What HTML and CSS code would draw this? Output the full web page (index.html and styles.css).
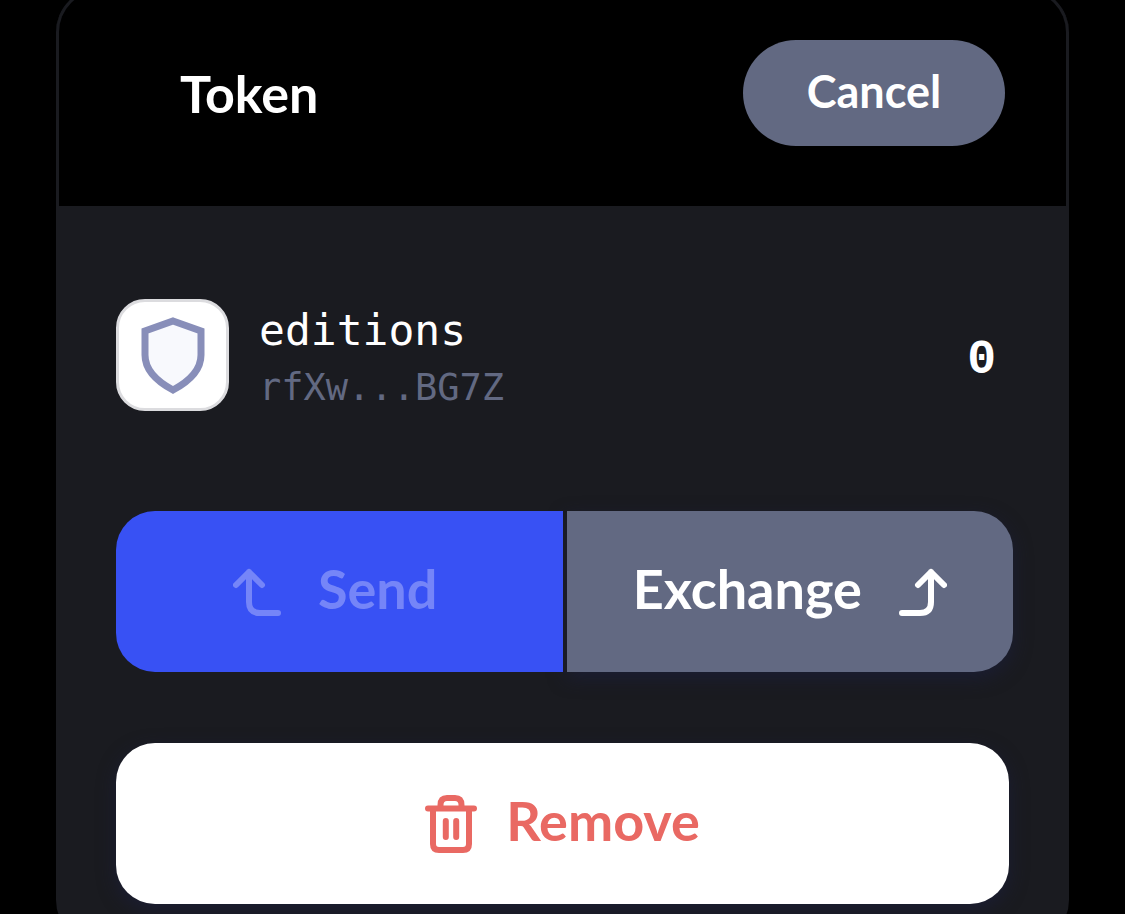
FILE: index.html
```html
<!DOCTYPE html>
<html lang="en">
<head>
<meta charset="utf-8">
<title>Token</title>
<link rel="stylesheet" href="styles.css">
</head>
<body>
<main class="card">
  <header class="header">
    <h1 class="title">Token</h1>
    <button class="cancel" type="button">Cancel</button>
  </header>
  <div class="content">
    <section class="token">
      <div class="avatar">
        <svg width="64" height="77" viewBox="0 0 64 77" aria-hidden="true"><path d="M32 4 60 14V38Q60 58 32 73Q4 58 4 38V14Z" fill="#f8f9fd" stroke="#888eb9" stroke-width="7"/></svg>
      </div>
      <div class="names">
        <div class="name">editions</div>
        <div class="address">rfXw...BG7Z</div>
      </div>
      <div class="balance">0</div>
    </section>
    <div class="actions">
      <button class="button send" type="button" disabled>
        <svg width="48" height="48" viewBox="0 0 48 48" aria-hidden="true"><path d="M3 17 16 4 29 17M16 4V34Q16 45 27 45H45"/></svg>
        <span>Send</span>
      </button>
      <button class="button exchange" type="button">
        <span>Exchange</span>
        <svg width="48" height="48" viewBox="0 0 48 48" aria-hidden="true"><path d="M19 17 32 4 45 17M32 4V34Q32 45 21 45H3"/></svg>
      </button>
    </div>
    <button class="button remove" type="button">
      <svg width="52" height="58" viewBox="0 0 52 58" aria-hidden="true"><path d="M3 13.500H49M8 14V49Q8 55 14 55H38Q44 55 44 49V14M15.500 13V10Q15.500 3 22 3H30Q36.500 3 36.500 10V13M20.800 26V42M31.200 26V42"/></svg>
      <span>Remove</span>
    </button>
  </div>
</main>
</body>
</html>
```
FILE: styles.css
```css
* { box-sizing: border-box; }
body {
  margin: 0;
  padding: 0 56px;
  background: #000;
  color: #fff;
  font-family: Lato, sans-serif;
  overflow: hidden;
}
button { border: 0; color: inherit; font: inherit; }
.card {
  margin-top: -12px;
  padding: 0 3px;
  overflow: hidden;
  border-radius: 44px;
  background: #1a1b20;
  border-top: 3px solid #1a1b20;
}
.header {
  display: flex;
  align-items: center;
  justify-content: space-between;
  padding: 49px 61px 60px 121px;
  border-radius: 41px 41px 0 0;
  background: #000;
}
.title { margin: 0; font-size: 52px; line-height: 60px; font-weight: 700; }
.cancel {
  width: 262px;
  height: 106px;
  padding: 0 0 4px;
  border-radius: 53px;
  background: #626982;
  font-size: 45px;
  font-weight: 700;
}
.content { padding: 89px 57px 40px; }
.token { display: flex; align-items: center; }
.avatar {
  display: flex;
  align-items: center;
  justify-content: center;
  width: 113px;
  height: 112px;
  border: 3px solid #dcdcdf;
  border-radius: 29px;
  background: #fff;
}
.names { margin-left: 30px; padding-top: 8px; font-family: "DejaVu Sans Mono", monospace; }
.name { font-size: 43px; line-height: 58px; }
.address { color: #626982; font-size: 37px; line-height: 58px; }
.token { height: 120px; }
.balance {
  margin-left: auto;
  padding: 10px 13px 0 0;
  font: 700 48px/60px "Liberation Mono", monospace;
}
.actions {
  display: grid;
  grid-template-columns: 1fr 1fr;
  gap: 4px;
  margin: 96px -4px 71px 0;
}
.button {
  display: flex;
  align-items: center;
  justify-content: center;
  height: 161px;
  padding: 0;
  border-radius: 39px;
  box-shadow: 0 6px 18px #1b1f3cb0;
  font-size: 54px;
  line-height: 60px;
  font-weight: 700;
}
.button span { padding-bottom: 6px; }
.button svg {
  flex: none;
  fill: none;
  stroke: currentColor;
  stroke-width: 6;
  stroke-linecap: round;
  stroke-linejoin: round;
}
.send {
  position: relative;
  z-index: 1;
  gap: 37px;
  padding-right: 8px;
  border-radius: 39px 0 0 39px;
  background: #3851f4;
  box-shadow: none;
  color: #7585f8;
}
.exchange {
  gap: 37px;
  border-radius: 0 39px 39px 0;
  background: #626982;
}
.remove {
  gap: 29px;
  width: 100%;
  background: #fff;
  color: #e96963;
}
```
